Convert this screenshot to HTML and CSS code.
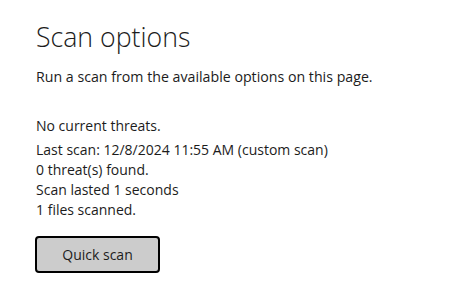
FILE: index.html
```html
<!DOCTYPE html>
<html>
	<head>
		<meta charset='utf-8'>
		<title>Scan options</title>
		<link rel="stylesheet" href="styles.css">
	</head>
	<body>
		<main class='page'>
			<h1>Scan options</h1>
			<p class='lead'>Run a scan from the available options on this page.</p>
			<div class='status'>
				<div class='current'>No current threats.</div>
				<div>Last scan: 12/8/2024 11:55 AM (custom scan)</div>
				<div>0 threat(s) found.</div>
				<div>Scan lasted 1 seconds</div>
				<div>1 files scanned.</div>
			</div>
			<button class='scan'>Quick scan</button>
		</main>
	</body>
</html>
```

FILE: styles.css
```css
html {
	background-color: #fff;
	color: #1c1c1c;
	font-family: "Open Sans", "Noto Sans", sans-serif;
	font-size: 14px;
}
body {
	margin: 0;
	padding: 0;
}
.page {
	padding: 18px 36px;
}
h1 {
	font-size: 26.7px;
	font-weight: 300;
	margin: 0;
	line-height: 38px;
}
.lead {
	margin: 11px 0 0 0;
	line-height: 20px;
	font-size: 14.2px;
}
.status {
	margin-top: 29px;
	line-height: 20px;
}
.current {
	margin-bottom: 4px;
}
.scan {
	margin-top: 16px;
	margin-left: -1px;
	width: 125px;
	height: 37px;
	background-color: #cccccc;
	border: 2px solid #000;
	border-radius: 4px;
	font-family: "Open Sans", "Noto Sans", sans-serif;
	font-size: 14px;
	color: #1c1c1c;
}
```
